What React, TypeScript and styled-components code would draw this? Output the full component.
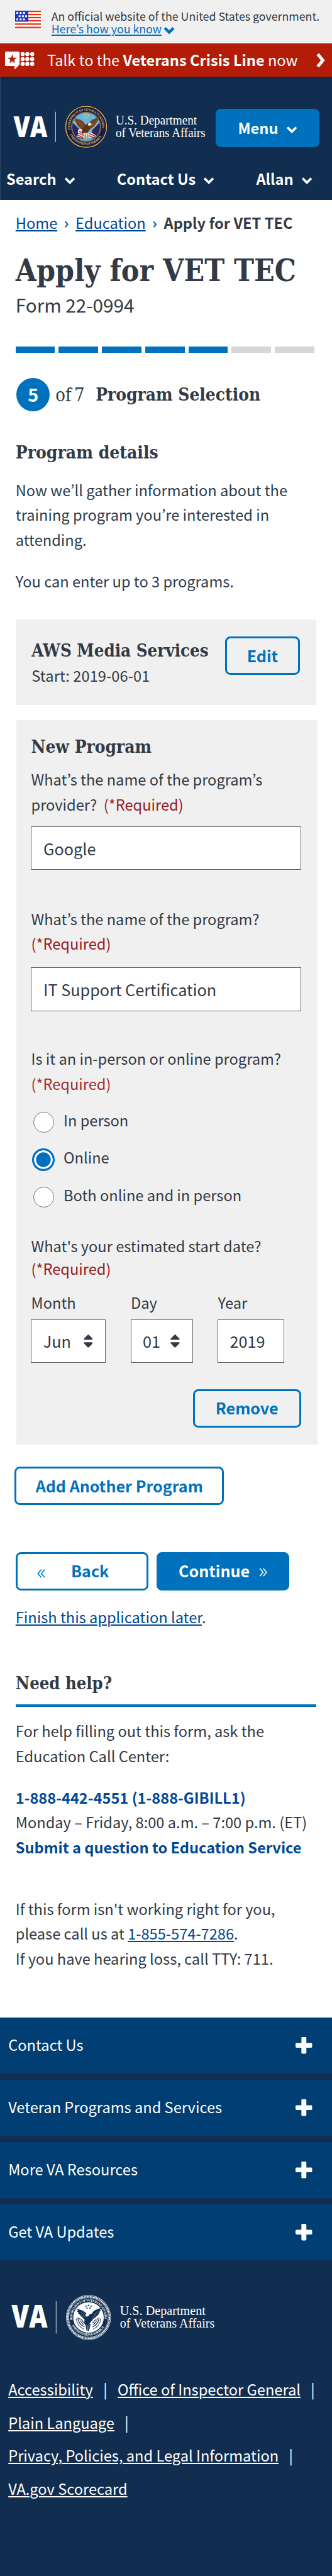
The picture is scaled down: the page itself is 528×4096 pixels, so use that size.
import React from 'react';
import styled, { createGlobalStyle, css } from 'styled-components';

const sans = `'Noto Sans CJK KR', 'Noto Sans', sans-serif`;
const slab = `'DejaVu Serif Condensed', 'DejaVu Serif', serif`;

const color = {
  text: '#323a45',
  blue: '#0071bc',
  link: '#004795',
  navy: '#112e51',
  footerRow: '#003e73',
  red: '#b31d07',
  required: '#981b1e',
  gray: '#f0f0f0',
  border: '#5b616b',
};

const GlobalStyle = createGlobalStyle`
  html { font-size: 8.25px; }
  *, *::before, *::after { box-sizing: border-box; }
  body { margin: 0; background: #fff; }
`;

const Page = styled.div`
  display: flex;
  flex-direction: column;
  min-height: 100vh;
  overflow: hidden;
  font: 400 2.865rem/4.8rem ${sans};
  color: ${color.text};
`;

/* ---------- top banners ---------- */

const GovBanner = styled.div`
  display: flex;
  height: 8.4rem;
  padding: 0 0 0 2.9rem;
  background: ${color.gray};
`;

const Flag = styled.svg`
  flex: none;
  width: 5rem;
  height: 3.4rem;
  margin: 2rem 2rem 0 0;
`;

const GovText = styled.div`
  padding-top: 1.94rem;
  font-size: 2.155rem;
  line-height: 2.4rem;
  white-space: nowrap;
`;

const underline = css`
  text-decoration: underline;
  text-decoration-thickness: 0.2rem;
  text-underline-offset: 0.3rem;
`;

const GovLink = styled.a`
  color: ${color.blue};
  ${underline}
  text-underline-offset: 0.2rem;
`;

const CrisisBar = styled.div`
  display: flex;
  align-items: center;
  height: 6.4rem;
  padding: 0 1.2rem 0 1rem;
  background: ${color.red};
  color: #fff;
  white-space: nowrap;
`;

const CrisisIcon = styled.svg`
  flex: none;
  width: 5.7rem;
  height: 3.6rem;
  margin: 0.3rem 2.4rem 0 0;
`;

const CrisisText = styled.span`
  flex: 1;
`;

const Arrow = styled.svg`
  flex: none;
  width: 2rem;
  height: 2.9rem;
`;

/* ---------- header ---------- */

const Header = styled.header`
  height: 23.8rem;
  padding-top: 6.2rem;
  background: ${color.navy};
  color: #fff;
  font-weight: 700;
  box-shadow: inset 1px 0 0 rgba(255, 255, 255, 0.12), inset 0 0.8rem 0.8rem -0.6rem rgba(0, 0, 0, 0.25);
`;

const HeaderTop = styled.div`
  display: flex;
  align-items: center;
  justify-content: space-between;
  height: 7.4rem;
  padding: 0 2.4rem 0 2.6rem;
`;

const LogoSvg = styled.svg<{ $w: number; $h: number }>`
  display: block;
  flex: none;
  width: ${(p) => p.$w}rem;
  height: ${(p) => p.$h}rem;
  overflow: visible;
`;

const MenuButton = styled.button`
  display: flex;
  align-items: center;
  justify-content: center;
  gap: 1.5rem;
  width: 20rem;
  height: 7.4rem;
  padding: 0;
  border: 0;
  border-radius: 1rem;
  background: ${color.blue};
  color: #fff;
  font: inherit;
`;

const Nav = styled.nav`
  display: flex;
  justify-content: space-between;
  align-items: center;
  height: 6rem;
  margin-top: 3.17rem;
  padding: 0 3.8rem 0 1.2rem;
`;

const NavItem = styled.a`
  display: flex;
  align-items: center;
  gap: 1.45rem;
`;

const ChevronSvg = styled.svg<{ $inline?: boolean }>`
  width: 2.2rem;
  height: 1.5rem;
  ${(p) => (p.$inline ? 'margin-left: 0.4rem; vertical-align: -0.2rem;' : 'margin-top: 0.6rem;')}
`;

/* ---------- main ---------- */

const Main = styled.main`
  padding: 2.05rem 3rem 8.93rem;
`;

const Breadcrumbs = styled.nav`
  display: flex;
  white-space: nowrap;
`;

const Link = styled.a`
  color: ${color.link};
  ${underline}
`;

const Separator = styled.span`
  width: 3.5rem;
  text-align: center;
  color: ${color.link};
  font-family: 'Noto Sans', sans-serif;
`;

const Title = styled.h1`
  margin: 3.32rem 0 0.74rem;
  font: 700 5.79rem/6.8rem ${slab};
  white-space: nowrap;
`;

const FormNumber = styled.div`
  font-size: 3.6rem;
  line-height: 4.8rem;
`;

const Progress = styled.div`
  display: flex;
  gap: 0.73rem;
  height: 1.2rem;
  margin-top: 5.72rem;
`;

const Segment = styled.div<{ $done: boolean }>`
  width: 7.6rem;
  background: ${(p) => (p.$done ? color.blue : '#d6d7d9')};
`;

const StepRow = styled.div`
  display: flex;
  align-items: center;
  height: 6.4rem;
  margin: 4.8rem 0 5.93rem;
  padding-left: 0.2rem;
  white-space: nowrap;
`;

const StepCircle = styled.span`
  display: flex;
  align-items: center;
  justify-content: center;
  width: 6.4rem;
  height: 6.4rem;
  border-radius: 50%;
  background: ${color.blue};
  color: #fff;
  font-size: 3.5rem;
  font-weight: 700;
`;

const StepTotal = styled.span`
  width: 8.85rem;
  padding: 0.4rem 0 0 1.1rem;
  font: 400 3.5rem/4.8rem ${slab};
  word-spacing: -0.45rem;
`;

const Heading = styled.h2<{ $size?: number }>`
  margin: 0;
  font: 700 ${(p) => p.$size ?? 3.38}rem/4.4rem ${slab};
  white-space: nowrap;
`;

const StepName = styled(Heading)`
  padding-top: 0.2rem;
`;

const Paragraph = styled.p<{ $top: number; $dark?: boolean }>`
  margin: ${(p) => p.$top}rem 0 0;
  white-space: nowrap;
  ${(p) => p.$dark && 'color: #2b3d4f;'}
`;

const Button = styled.button<{ $w: number; $solid?: boolean }>`
  display: flex;
  align-items: center;
  justify-content: center;
  flex: none;
  width: ${(p) => p.$w}rem;
  height: 7.4rem;
  padding: 0;
  border: 0.4rem solid ${color.blue};
  border-radius: 1rem;
  background: ${(p) => (p.$solid ? color.blue : 'transparent')};
  color: ${(p) => (p.$solid ? '#fff' : color.blue)};
  font: 700 3.04rem/4.8rem ${sans};
  white-space: nowrap;
`;

const SavedCard = styled.section`
  display: flex;
  justify-content: space-between;
  align-items: flex-start;
  height: 16.4rem;
  margin-top: 4.93rem;
  padding: 3.2rem 3.2rem 0 3.1rem;
  background: ${color.gray};
`;

const SavedInfo = styled.div`
  padding-top: 0.49rem;
`;

const SavedDate = styled.div`
  margin-top: 0.39rem;
  letter-spacing: 0.01rem;
`;

const ProgramCard = styled.section`
  width: 58rem;
  margin: 3rem 0 0 0.2rem;
  padding: 2.94rem 3.2rem 3.36rem 2.8rem;
  background: ${color.gray};
`;

const Field = styled.div<{ $top: number; $gap?: number }>`
  display: flex;
  flex-direction: column;
  gap: ${(p) => p.$gap ?? 0}rem;
  margin-top: ${(p) => p.$top}rem;
`;

const Label = styled.label<{ $tight?: boolean }>`
  white-space: nowrap;
  ${(p) => p.$tight && 'line-height: 4.4rem;'}
`;

const Required = styled.span<{ $soft?: boolean }>`
  color: ${(p) => (p.$soft ? '#a12f31' : color.required)};
`;

const box = css`
  border: 0.2rem solid ${color.border};
  background: #fff;
  color: ${color.text};
  font: 400 3.06rem/4.8rem ${sans};
`;

const TextInput = styled.input`
  ${box}
  width: 100%;
  height: 8.4rem;
  padding: 0 0 0 2.25rem;
  border-radius: 0;
  outline: 0;
`;

const RadioRow = styled.label`
  display: flex;
  align-items: center;
  height: 7.2rem;
  white-space: nowrap;
`;

const RadioSlot = styled.span`
  display: flex;
  justify-content: center;
  width: 4.8rem;
  margin-right: 1.45rem;
`;

const Radio = styled.input`
  appearance: none;
  width: 4rem;
  height: 4rem;
  margin: 0;
  border: 0.2rem solid #757575;
  border-radius: 50%;
  background: #fff;
  &:checked {
    width: 4.4rem;
    height: 4.4rem;
    border: 0.4rem solid ${color.blue};
    background: ${color.blue};
    box-shadow: inset 0 0 0 0.4rem #fff;
  }
`;

const RadioText = styled.span`
  padding-bottom: 0.64rem;
`;

const DateRow = styled.div`
  display: flex;
  gap: 4.8rem;
  margin-top: 2.07rem;
`;

const DateCell = styled.div<{ $w: number }>`
  display: flex;
  flex-direction: column;
  gap: 0.72rem;
  width: ${(p) => p.$w}rem;
`;

const DateBox = styled.div`
  ${box}
  display: flex;
  align-items: center;
  justify-content: space-between;
  height: 8.36rem;
  padding: 0 2.4rem 0 2.2rem;
`;

const CaretSvg = styled.svg`
  width: 1.8rem;
  height: 2.5rem;
`;

const CardFooter = styled.div`
  display: flex;
  justify-content: flex-end;
  margin-top: 5.05rem;
`;

const AddRow = styled.div`
  margin: 4.25rem 0 0 -0.2rem;
`;

const StepButtons = styled.div`
  display: flex;
  gap: 1.6rem;
  margin: 9.01rem 0 2.86rem;
`;

const Guillemet = styled.svg<{ $drop: number }>`
  width: 1.6rem;
  height: 1.7rem;
  margin-top: ${(p) => p.$drop}rem;
`;

const BackText = styled.span`
  margin: 0 3.5rem 0 5rem;
`;

const NextText = styled.span`
  margin-right: 1.85rem;
`;

const HelpHeading = styled(Heading)`
  margin-top: 8.05rem;
  padding-bottom: 1.91rem;
  border-bottom: 0.6rem solid ${color.blue};
  box-sizing: content-box;
`;

const StrongLink = styled.a`
  color: ${color.link};
  font-weight: 700;
`;

/* ---------- footer ---------- */

const Footer = styled.footer`
  flex: 1;
  background: ${color.navy};
  color: #fff;
`;

const FooterRow = styled.div`
  display: flex;
  align-items: center;
  justify-content: space-between;
  height: 10.8rem;
  margin-bottom: 1.2rem;
  padding: 0 3.8rem 0 1.6rem;
  background: ${color.footerRow};
`;

const FooterRowText = styled.span`
  padding-bottom: 0.24rem;
`;

const PlusSvg = styled.svg`
  width: 3.2rem;
  height: 3.2rem;
`;

const FooterLogo = styled.div`
  padding: 5.23rem 0 6.05rem 2rem;
`;

const FooterLinks = styled.div`
  display: flex;
  flex-direction: column;
  padding-left: 1.6rem;
  line-height: 6.4rem;
`;

const FooterLine = styled.div`
  display: flex;
  white-space: nowrap;
`;

const FooterLink = styled.a`
  ${underline}
`;

const Pipe = styled.span`
  width: 4.75rem;
  text-align: center;
`;

/* ---------- drawings ---------- */

const Chevron = ({ inline, fill = '#fff' }: { inline?: boolean; fill?: string }) => (
  <ChevronSvg $inline={inline} viewBox="0 0 22 15">
    <path d="M2.6 3 L11 11.4 L19.4 3" fill="none" stroke={fill} strokeWidth={inline ? 5.4 : 4.4} />
  </ChevronSvg>
);

const Caret = () => (
  <CaretSvg viewBox="0 0 18 25" fill={color.text}>
    <path d="M9 0 Q9.6 0 10.2 .6 L17.4 8 Q18.6 10 16.6 10 H1.4 Q-.6 10 .6 8 L7.8 .6 Q8.4 0 9 0Z" />
    <path d="M9 25 Q9.6 25 10.2 24.4 L17.4 17 Q18.6 15 16.6 15 H1.4 Q-.6 15 .6 17 L7.8 24.4 Q8.4 25 9 25Z" />
  </CaretSvg>
);

const Star = ({ x, y, r, fill }: { x: number; y: number; r: number; fill: string }) => (
  <path
    transform={`translate(${x} ${y}) scale(${r})`}
    d="M0-1 L.235-.324 .951-.309 .38.124 .588.809 0 .4 -.588.809 -.38.124 -.951-.309 -.235-.324Z"
    fill={fill}
  />
);

const SEAL_STARS = [
  [-4.5, -22],
  [0, -23.5],
  [4.5, -22],
  [-2.6, -18],
  [2.6, -18],
];

const SealText = ({ id, size, fill, r }: { id: string; size: number; fill: string; r: number }) => (
  <g fontFamily="Liberation Serif, serif" fontWeight={700} fontSize={size} fill={fill}>
    <path id={`${id}-top`} d={`M${-r * 0.985} ${r * 0.17} A${r} ${r} 0 1 1 ${r * 0.985} ${r * 0.17}`} fill="none" />
    <path
      id={`${id}-bottom`}
      d={`M${-(r + 4) * 0.9} ${(r + 4) * 0.43} A${r + 4} ${r + 4} 0 0 0 ${(r + 4) * 0.9} ${(r + 4) * 0.43}`}
      fill="none"
    />
    <text textLength={r * 3.4} lengthAdjust="spacing">
      <textPath href={`#${id}-top`}>DEPARTMENT OF VETERANS AFFAIRS</textPath>
    </text>
    <text textLength={r * 2.4} lengthAdjust="spacing">
      <textPath href={`#${id}-bottom`}>UNITED STATES OF AMERICA</textPath>
    </text>
  </g>
);

const WING_LEFT =
  'M-1 -3 C-4 -9 -9 -13 -13 -14 L-23 -17 -20 -13 -23 -12 -18.5 -9 -21 -8 -16.5 -5 -19 -3.6 -14 -1.5 -16 .2 -11 1.5 -12 3.6 -7 4.2 -7 6 -2 6Z';
const WING_RIGHT =
  'M5 -4 C7 -10 11 -14 15 -15 L25 -19 22 -14.5 24 -13 20 -10.5 22 -9 18 -6.5 20 -5 15.5 -3 17 -1.2 12 .4 13 2.4 8 3.4 8 5.4 3 6Z';
const BODY = 'M-4 0 C-1 -4 3 -8 7 -7 C10 -6 11 -4 12.4 -2 L8 -2.4 C8 4 5 10 0 13 L-7 14 C-9 8 -8 3 -4 0Z';

const ColorSeal = () => (
  <g transform="translate(166.6 245)">
    <circle r="41" fill="#1b1b45" />
    <circle r="39.4" fill="none" stroke="#e9b83f" strokeWidth="1.7" />
    <SealText id="seal" size={6.4} fill="#cdb66a" r={31} />
    <circle r="28.2" fill="#1b1b45" stroke="#d6a93a" strokeWidth="1" />
    <circle r="27.3" fill="#6db3d6" />
    <path d="M-25.5 -8 L-18 0 -9 8 -4 20 -9 25.6 A27 27 0 0 1 -25.5 -8Z" fill="#28285c" />
    <path d="M25.5 -8 L18 0 12 6 8 20 10 25 A27 27 0 0 0 25.5 -8Z" fill="#28285c" />
    <path d="M-24 -10 L-9 6" stroke="#d9c9a0" strokeWidth="1" />
    <path d="M24 -10 L10 6" stroke="#d9c9a0" strokeWidth="1" />
    <path d="M-19 18 C-12 24 -5 22 0 24 C6 22 13 24 19 18 L13 24 C5 29 -6 29 -14 23Z" fill="#5aa0cc" />
    {SEAL_STARS.map(([x, y]) => (
      <Star key={`${x}`} x={x} y={y} r={2} fill="#f3d64c" />
    ))}
    <path d="M-15 5 C-11 3 -6 6 -4 11 L-2 20 C-8 22 -14 19 -18 20 C-14 15 -17 10 -15 5Z" fill="#f3eef0" />
    <path d="M-14 8 L-5 13 M-15.4 12 L-4 17 M-16 16.6 L-6 20.4" stroke="#c42d3c" strokeWidth="2" />
    <path d="M4 12 C8 9 12 12 16 15 L20 18 C14 19 10 23 5 21Z" fill="#f3eef0" />
    <path d="M6 13 L17 18 M5.6 17 L13 20.4" stroke="#c42d3c" strokeWidth="2" />
    <path d={WING_LEFT} fill="#6e4224" />
    <path d={WING_RIGHT} fill="#6e4224" />
    <path d="M-16 -11 L-5 -1 M-14 -7 L-5 2 M18 -12 L7 -2 M16 -7 L7 2" stroke="#8f6039" strokeWidth="1" />
    <path d={BODY} fill="#5d3418" />
    <path d="M3 -5 C5 -8 9 -8 11 -5 L8.6 -2.6 4.6 -2Z" fill="#f6f3ee" />
    <path d="M10 -5.6 L13 -3.6 10.4 -3Z" fill="#e9b83f" />
    <path d="M-6 12 L3 12 2 20 -1 26 -4 20Z" fill="#e6edf4" />
    <path d="M-4.4 13 L-3 25 M-1 13 V27 M2 13 L.6 25" stroke="#d1901f" strokeWidth="1.3" />
    <path d="M-1 15 V22" stroke="#c42d3c" strokeWidth="1" />
  </g>
);

const MonoSeal = () => (
  <g transform="translate(170 4466)">
    <circle r="42.8" fill="none" stroke="#fff" strokeWidth="0.9" />
    <circle r="40.2" fill="none" stroke="#fff" strokeWidth="2.8" strokeDasharray="2.1 0.85" />
    <circle r="38" fill="none" stroke="#fff" strokeWidth="0.7" />
    <SealText id="seal-mono" size={6.2} fill="#fff" r={31.2} />
    <circle r="29.4" fill="#fff" />
    {SEAL_STARS.map(([x, y]) => (
      <Star key={`${x}`} x={x * 1.1} y={y} r={2.3} fill={color.navy} />
    ))}
    <g fill="none" stroke={color.navy} strokeWidth="1.6">
      <path d="M-23.5 2 A24 24 0 0 0 -9 22.5" strokeDasharray="2.4 1" />
      <path d="M23.5 2 A24 24 0 0 1 9 22.5" strokeDasharray="2.4 1" />
      <path d="M-20.5 0 A20 20 0 0 0 -8 18" />
      <path d="M20.5 0 A20 20 0 0 1 8 18" />
      <path d="M-17 1 A17 17 0 0 0 -8 14" strokeDasharray="2 0.8" />
      <path d="M17 1 A17 17 0 0 1 8 14" strokeDasharray="2 0.8" />
      <path d="M-13.5 3 A13 13 0 0 0 -7 11" />
      <path d="M13.5 3 A13 13 0 0 1 7 11" />
    </g>
    <path d={WING_LEFT} fill={color.navy} />
    <path d={WING_RIGHT} fill={color.navy} />
    <path d="M-15 -11 L-6 -1 M-11 -12 L-4 -3 M-15 -6 L-8 1 M18 -13 L8 -1 M15 -7 L8 2" stroke="#9fb0c4" strokeWidth="0.7" />
    <path d="M-26 -12 L-8 6" stroke="#fff" strokeWidth="3" />
    <path d="M27 -9 L9 5" stroke="#fff" strokeWidth="3" />
    <path d={BODY} fill={color.navy} />
    <path d="M-6 -5 C-4 -8 0 -8 2 -5 L-1 -2 -5 -2Z" fill="#fff" />
    <path d="M-6 13 L4 12 3 19 1 26 -4 25Z" fill={color.navy} />
    <path d="M-3 15 L-2 25 M1 14 V24" stroke="#fff" strokeWidth="1" />
  </g>
);

const HeaderLogo = () => (
  <LogoSvg $w={37.4} $h={8.8} viewBox="26 203 374 88" fill="#fff" role="img">
    <text x="26.5" y="264.4" fontFamily="Open Sans, sans-serif" fontWeight={800} fontSize="56.5" textLength="65.5" lengthAdjust="spacingAndGlyphs">
      VA
    </text>
    <rect x="106.9" y="216" width="1.4" height="58.5" opacity="0.75" />
    <ColorSeal />
    <g fontFamily="Liberation Serif, serif" fontWeight={400} fontSize="24.4">
      <text x="223.6" y="241" textLength="156.5" lengthAdjust="spacingAndGlyphs">U.S. Department</text>
      <text x="223.6" y="264.4" textLength="172.8" lengthAdjust="spacingAndGlyphs">of Veterans Affairs</text>
    </g>
  </LogoSvg>
);

const FooterLogoSvg = () => (
  <LogoSvg $w={40} $h={9.2} viewBox="20 4420 400 92" fill="#fff" role="img">
    <text x="21.5" y="4486" fontFamily="Open Sans, sans-serif" fontWeight={800} fontSize="59" textLength="69.5" lengthAdjust="spacingAndGlyphs">
      VA
    </text>
    <rect x="107" y="4434.6" width="1.2" height="62.4" opacity="0.8" />
    <MonoSeal />
    <g fontFamily="Liberation Serif, serif" fontSize="25.6">
      <text x="230.6" y="4461.6" textLength="165" lengthAdjust="spacingAndGlyphs">U.S. Department</text>
      <text x="230.6" y="4486" textLength="182.5" lengthAdjust="spacingAndGlyphs">of Veterans Affairs</text>
    </g>
  </LogoSvg>
);

const FlagIcon = () => (
  <Flag viewBox="0 0 50 34">
    <rect width="50" height="34" fill="#fff" />
    {[0, 6, 12, 18, 24.5, 31].map((y) => (
      <rect key={y} y={y} width="50" height="2.7" fill="#f2290b" />
    ))}
    <rect width="25.5" height="21.2" fill="#2536b8" />
    {[
      [2.5, 2.5], [9, 2.5], [15.4, 2.5],
      [6.8, 8.8], [13.2, 8.8], [19.4, 8.8],
      [2.5, 15], [9, 15], [15.4, 15],
    ].map(([x, y]) => (
      <rect key={`${x}-${y}`} x={x} y={y} width="3.6" height="3.6" fill="#fff" />
    ))}
  </Flag>
);

const VeteransLineIcon = () => (
  <CrisisIcon viewBox="0 0 57 36" fill="#fff">
    <path d="M2 0 H26 Q28 0 28 2 V25 L18.4 35 V28 H2 Q0 28 0 26 V2 Q0 0 2 0Z" />
    <Star x={14} y={14.8} r={9.6} fill={color.red} />
    {[34, 43, 52.4].map((x) => [5, 14.6, 23.8].map((y) => <circle key={`${x}-${y}`} cx={x} cy={y} r="4" />))}
  </CrisisIcon>
);

const Plus = () => (
  <PlusSvg viewBox="0 0 32 32" fill="#fff">
    <rect x="11.3" width="9.6" height="32" rx="1.8" />
    <rect y="11.5" width="32" height="9.2" rx="1.8" />
  </PlusSvg>
);

const FOOTER_SECTIONS = ['Contact Us', 'Veteran Programs and Services', 'More VA Resources', 'Get VA Updates'];
const FOOTER_LINKS = [
  ['Accessibility', 'Office of Inspector General'],
  ['Plain Language'],
  ['Privacy, Policies, and Legal Information'],
  ['VA.gov Scorecard'],
];
const FORMATS = ['In person', 'Online', 'Both online and in person'];

export default function App() {
  return (
    <Page>
      <GlobalStyle />
      <GovBanner>
        <FlagIcon />
        <GovText>
          <div>An official website of the United States government.</div>
          <div>
            <GovLink>Here’s how you know</GovLink>
            <Chevron inline fill={color.blue} />
          </div>
        </GovText>
      </GovBanner>
      <CrisisBar>
        <VeteransLineIcon />
        <CrisisText>
          Talk to the <b>Veterans Crisis Line</b> now
        </CrisisText>
        <Arrow viewBox="0 0 20 29">
          <path d="M4 2.6 L14 14.5 L4 26.4" fill="none" stroke="#fff" strokeWidth="6" />
        </Arrow>
      </CrisisBar>

      <Header>
        <HeaderTop>
          <HeaderLogo />
          <MenuButton>
            Menu
            <Chevron />
          </MenuButton>
        </HeaderTop>
        <Nav>
          {['Search', 'Contact Us', 'Allan'].map((item) => (
            <NavItem key={item}>
              {item}
              <Chevron />
            </NavItem>
          ))}
        </Nav>
      </Header>

      <Main>
        <Breadcrumbs>
          <Link>Home</Link>
          <Separator>›</Separator>
          <Link>Education</Link>
          <Separator>›</Separator>
          <b>Apply for VET TEC</b>
        </Breadcrumbs>
        <Title>Apply for VET TEC</Title>
        <FormNumber>Form 22-0994</FormNumber>
        <Progress>
          {[1, 2, 3, 4, 5, 6, 7].map((n) => (
            <Segment key={n} $done={n <= 5} />
          ))}
        </Progress>
        <StepRow>
          <StepCircle>5</StepCircle>
          <StepTotal>of 7</StepTotal>
          <StepName>Program Selection</StepName>
        </StepRow>

        <Heading $size={3.4}>Program details</Heading>
        <Paragraph $top={2.56} $dark>
          Now we’ll gather information about the
          <br />
          training program you’re interested in
          <br />
          attending.
        </Paragraph>
        <Paragraph $top={3.21} $dark>
          You can enter up to 3 programs.
        </Paragraph>

        <SavedCard>
          <SavedInfo>
            <Heading $size={3.33}>AWS Media Services</Heading>
            <SavedDate>Start: 2019-06-01</SavedDate>
          </SavedInfo>
          <Button $w={14.4}>Edit</Button>
        </SavedCard>

        <ProgramCard>
          <Heading>New Program</Heading>
          <Field $top={1.73} $gap={1.75}>
            <Label>
              What’s the name of the program’s
              <br />
              provider?&nbsp; <Required>(*Required)</Required>
            </Label>
            <TextInput defaultValue="Google" />
          </Field>
          <Field $top={7.09} $gap={2.12}>
            <Label>
              What’s the name of the program?
              <br />
              <Required>(*Required)</Required>
            </Label>
            <TextInput defaultValue="IT Support Certification" />
          </Field>
          <Field $top={6.89} $gap={1.33}>
            <Label>
              Is it an in-person or online program?
              <br />
              <Required $soft>(*Required)</Required>
            </Label>
            <div>
              {FORMATS.map((name) => (
                <RadioRow key={name}>
                  <RadioSlot>
                    <Radio type="radio" name="format" defaultChecked={name === 'Online'} />
                  </RadioSlot>
                  <RadioText>{name}</RadioText>
                </RadioRow>
              ))}
            </div>
          </Field>
          <Field $top={3.63}>
            <Label $tight>
              What's your estimated start date?
              <br />
              <Required>(*Required)</Required>
            </Label>
            <DateRow>
              <DateCell $w={14.4}>
                <Label>Month</Label>
                <DateBox>
                  <span>Jun</span>
                  <Caret />
                </DateBox>
              </DateCell>
              <DateCell $w={12}>
                <Label>Day</Label>
                <DateBox>
                  <span>01</span>
                  <Caret />
                </DateBox>
              </DateCell>
              <DateCell $w={12.8}>
                <Label>Year</Label>
                <DateBox>
                  <span>2019</span>
                </DateBox>
              </DateCell>
            </DateRow>
          </Field>
          <CardFooter>
            <Button $w={20.8}>Remove</Button>
          </CardFooter>
        </ProgramCard>

        <AddRow>
          <Button $w={40.4}>Add Another Program</Button>
        </AddRow>

        <StepButtons>
          <Button $w={25.6}>
            <Guillemet $drop={0.8} viewBox="0 0 16 17">
              <path d="M8 .8 L1.6 8.5 L8 16.2 M14.6 .8 L8.2 8.5 L14.6 16.2" fill="none" stroke={color.blue} strokeWidth="1.9" />
            </Guillemet>
            <BackText>Back</BackText>
          </Button>
          <Button $w={25.6} $solid>
            <NextText>Continue</NextText>
            <Guillemet $drop={0.4} viewBox="0 0 16 17">
              <path d="M1.4 .8 L7.8 8.5 L1.4 16.2 M8 .8 L14.4 8.5 L8 16.2" fill="none" stroke="#fff" strokeWidth="1.9" />
            </Guillemet>
          </Button>
        </StepButtons>
        <div>
          <Link>Finish this application later</Link>.
        </div>

        <HelpHeading $size={3.3}>Need help?</HelpHeading>
        <Paragraph $top={2.25}>
          For help filling out this form, ask the
          <br />
          Education Call Center:
        </Paragraph>
        <Paragraph $top={3.21}>
          <StrongLink>1-888-442-4551 (1-888-GIBILL1)</StrongLink>
          <br />
          Monday – Friday, 8:00 a.m. – 7:00 p.m. (ET)
          <br />
          <StrongLink>Submit a question to Education Service</StrongLink>
        </Paragraph>
        <Paragraph $top={7.04}>
          If this form isn't working right for you,
          <br />
          please call us at <Link>1-855-574-7286</Link>.
          <br />
          If you have hearing loss, call TTY: 711.
        </Paragraph>
      </Main>

      <Footer>
        {FOOTER_SECTIONS.map((name) => (
          <FooterRow key={name}>
            <FooterRowText>{name}</FooterRowText>
            <Plus />
          </FooterRow>
        ))}
        <FooterLogo>
          <FooterLogoSvg />
        </FooterLogo>
        <FooterLinks>
          {FOOTER_LINKS.map((line, i) => (
            <FooterLine key={i}>
              {line.map((name) => (
                <React.Fragment key={name}>
                  <FooterLink>{name}</FooterLink>
                  {i < 3 && <Pipe>|</Pipe>}
                </React.Fragment>
              ))}
            </FooterLine>
          ))}
        </FooterLinks>
      </Footer>
    </Page>
  );
}
